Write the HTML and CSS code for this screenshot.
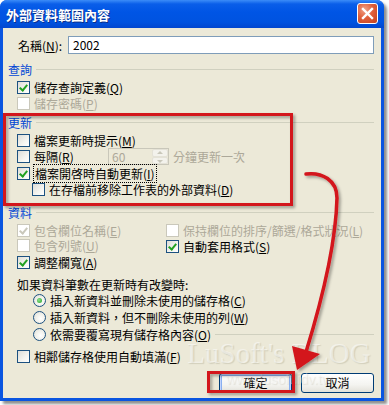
FILE: index.html
```html
<!DOCTYPE html>
<html lang="zh-Hant">
<head>
<meta charset="utf-8">
<link rel="stylesheet" href="styles.css">
</head>
<body>
<div class="window">
  <div class="titlebar">
    <span class="title">外部資料範圍內容</span>
    <span class="close"><svg width="21" height="21" viewBox="0 0 21 21"><path d="M6 6 L15 15 M15 6 L6 15" stroke="#fff" stroke-width="2.4" stroke-linecap="square"/></svg></span>
  </div>
  <div class="body">
    <div class="name-row">
      <span class="name-label">名稱(<u>N</u>):</span>
      <div class="input">2002</div>
    </div>

    <div class="group"><span class="group-label">查詢</span><span class="rule"></span></div>
    <div class="row"><span class="cb checked"></span><span>儲存查詢定義(<u>Q</u>)</span></div>
    <div class="row disabled"><span class="cb"></span><span>儲存密碼(<u>P</u>)</span></div>

    <div class="group g2"><span class="group-label">更新</span><span class="rule"></span></div>
    <div class="row r-prompt"><span class="cb"></span><span>檔案更新時提示(<u>M</u>)</span></div>
    <div class="row r-every">
      <span class="cb"></span><span class="every-label">每隔(<u>R</u>)</span>
      <div class="spin"><span class="spin-val">60</span><span class="spin-btns"><span class="sb up"></span><span class="sb down"></span></span></div>
      <span class="muted">分鐘更新一次</span>
    </div>
    <div class="row r-open"><span class="cb checked"></span><span class="focus">檔案開啓時自動更新(<u>I</u>)</span></div>
    <div class="row sub"><span class="cb"></span><span>在存檔前移除工作表的外部資料(<u>D</u>)</span></div>

    <div class="group g3"><span class="group-label">資料</span><span class="rule"></span></div>
    <div class="cols">
      <div class="col left">
        <div class="row disabled"><span class="cb checked"></span><span>包含欄位名稱(<u>E</u>)</span></div>
        <div class="row disabled"><span class="cb"></span><span>包含列號(<u>U</u>)</span></div>
        <div class="row"><span class="cb checked"></span><span>調整欄寬(<u>A</u>)</span></div>
      </div>
      <div class="col right">
        <div class="row disabled"><span class="cb"></span><span>保持欄位的排序/篩選/格式狀況(<u>L</u>)</span></div>
        <div class="row"><span class="cb checked"></span><span>自動套用格式(<u>S</u>)</span></div>
      </div>
    </div>
    <div class="text-row">如果資料筆數在更新時有改變時:</div>
    <div class="row radio-row"><span class="radio on"></span><span>插入新資料並刪除未使用的儲存格(<u>C</u>)</span></div>
    <div class="row radio-row"><span class="radio"></span><span>插入新資料，但不刪除未使用的列(<u>W</u>)</span></div>
    <div class="row radio-row last"><span class="radio"></span><span>依需要覆寫現有儲存格內容(<u>O</u>)</span><span class="rule"></span></div>
    <div class="row fill-row"><span class="cb"></span><span>相鄰儲存格使用自動填滿(<u>F</u>)</span></div>

    <div class="buttons">
      <button class="btn default">確定</button>
      <button class="btn">取消</button>
    </div>
  </div>
</div>

<div class="watermark"><div class="wm-big">LuSoft's BLOG</div><div class="wm-small">www.lusoft.idv.tw</div></div>

<svg class="annot" width="389" height="405" viewBox="0 0 389 405">
  <defs>
    <filter id="sh" x="-10%" y="-10%" width="130%" height="130%">
      <feDropShadow dx="2" dy="2" stdDeviation="1.5" flood-color="#000" flood-opacity="0.35"/>
    </filter>
  </defs>
  <g filter="url(#sh)">
    <rect x="4.5" y="114.5" width="287" height="90" fill="none" stroke="#d3131b" stroke-width="3"/>
    <rect x="208.5" y="372.5" width="85" height="19" fill="none" stroke="#d3131b" stroke-width="3"/>
    <path d="M306 174 C322 172 337 180 337 198 C336 240 322 300 306 352" fill="none" stroke="#d3131b" stroke-width="3.5" stroke-linecap="round"/>
    <path d="M297 370 L292 346 L320 354 Z" fill="#d3131b"/>
  </g>
</svg>
</body>
</html>
```

FILE: styles.css
```css
* { box-sizing: border-box; }
html, body { margin: 0; padding: 0; }
body {
  width: 389px;
  height: 405px;
  background: #ffffff;
  font-family: "Noto Sans CJK TC", "Noto Sans", sans-serif;
  font-size: 12px;
  color: #000;
  position: relative;
  overflow: hidden;
}
u { text-decoration: underline; }

.window {
  width: 384px;
  height: 401px;
  background: #0a55e0;
  border-radius: 7px 7px 0 0;
  padding: 0 3px 3px 3px;
  display: flex;
  flex-direction: column;
  box-shadow: 3px 3px 3px rgba(0,0,0,0.45);
}

.titlebar {
  height: 28px;
  margin: 0 -3px;
  border-radius: 7px 7px 0 0;
  background: linear-gradient(#3c8cf8 0px, #0a5ee9 4px, #0055e5 12px, #0053e0 22px, #0247cf 28px);
  display: flex;
  align-items: center;
  justify-content: space-between;
  padding: 0 6px 0 6px;
}
.title {
  color: #fff;
  font-weight: bold;
  font-size: 13px;
  letter-spacing: 0;
  text-shadow: 1px 1px 0 #0c2f8a;
}
.close {
  width: 21px;
  height: 21px;
  border: 1px solid #fff;
  border-radius: 3px;
  background: radial-gradient(circle at 35% 30%, #f0a48a 0%, #e0603c 45%, #c3401c 100%);
  display: flex;
  align-items: center;
  justify-content: center;
  margin-top: -1px;
}
.close svg { display: block; margin: -1px; }

.body {
  flex: 1;
  background: #ece9d8;
  padding: 8px 7px 0 5px;
  display: flex;
  flex-direction: column;
  position: relative;
}

.name-row {
  display: flex;
  align-items: center;
  height: 18px;
}
.name-label { width: 60px; padding-left: 10px; }
.input {
  width: 306px;
  height: 18px;
  border: 1px solid #7f9db9;
  background: #fff;
  padding: 0 4px;
  line-height: 16px;
  margin-left: 0;
}

.group {
  display: flex;
  align-items: center;
  height: 14px;
  margin-top: 8px;
}
.group-label { color: #0046d5; padding-right: 4px; }
.rule {
  flex: 1;
  height: 1px;
  background: #d0d0bf;
  margin-right: 0;
}
.g2 { margin-top: 4px; }
.g3 { margin-top: 8px; }

.row {
  display: flex;
  align-items: center;
  height: 16px;
  padding-left: 9px;
  white-space: nowrap;
}
.group + .row { margin-top: 3px; }
.r-every { height: 17px; }
.r-open { height: 17px; }
.sub { padding-left: 24px; height: 15px; }

.cb {
  width: 13px;
  height: 13px;
  border: 1px solid #1c5180;
  background: linear-gradient(135deg, #dcdcd7 0%, #f4f4f0 60%, #ffffff 100%);
  margin-right: 4px;
  flex: none;
  position: relative;
}
.cb.checked::after {
  content: "";
  position: absolute;
  left: 3px;
  top: 1px;
  width: 3px;
  height: 6px;
  border: solid #21a121;
  border-width: 0 2px 2px 0;
  transform: rotate(40deg);
}
.disabled { color: #aca899; }
.disabled .cb { border-color: #cac8bb; background: #fff; }
.disabled .cb.checked::after { border-color: #cac8bb; }

.focus { outline: 1px dotted #000; outline-offset: 0; padding: 0 1px; }

.every-label { width: 74px; }
.spin {
  width: 61px;
  height: 17px;
  border: 1px solid #c9c7ba;
  background: #ece9d8;
  display: flex;
  align-items: center;
  justify-content: space-between;
  margin-right: 4px;
}
.spin-val { color: #aca899; padding-left: 3px; font-size: 12px; }
.spin-btns {
  width: 16px;
  height: 15px;
  display: flex;
  flex-direction: column;
}
.sb {
  flex: 1;
  border: 1px solid #e4e2d7;
  background: #f3f2ec;
  border-radius: 2px;
  position: relative;
}
.sb.up::after, .sb.down::after {
  content: "";
  position: absolute;
  left: 4px;
  top: 1px;
  border-left: 3px solid transparent;
  border-right: 3px solid transparent;
}
.sb.up::after { border-bottom: 3px solid #c9c7ba; }
.sb.down::after { border-top: 3px solid #c9c7ba; top: 2px; }
.muted { color: #aca899; }

.cols { display: flex; margin-top: 3px; }
.col.left { width: 149px; }
.col.right { flex: 1; }
.col .row { height: 16px; }
.col.left .row:nth-child(2) { height: 15px; }
.col.left .row:nth-child(3) { height: 18px; }

.text-row {
  height: 16px;
  margin-top: 5px;
  padding-left: 9px;
  display: flex;
  align-items: center;
}
.radio-row { padding-left: 25px; height: 17px; }
.radio-row.last .rule { margin-left: 4px; }
.radio {
  width: 13px;
  height: 13px;
  border-radius: 50%;
  border: 1px solid #1c5180;
  background: radial-gradient(circle at 60% 60%, #ffffff 0%, #f0f0ea 50%, #d8d8d0 100%);
  margin-right: 4px;
  flex: none;
  position: relative;
}
.radio.on::after {
  content: "";
  position: absolute;
  left: 3px;
  top: 3px;
  width: 5px;
  height: 5px;
  border-radius: 50%;
  background: radial-gradient(circle at 40% 40%, #8ee28e, #21a121);
}
.fill-row { margin-top: 5px; }

.buttons {
  display: flex;
  justify-content: flex-end;
  gap: 9px;
  margin-top: 9px;
  padding-right: 0;
}
.btn {
  width: 73px;
  height: 20px;
  font-family: "Noto Sans CJK TC", sans-serif;
  font-size: 12px;
  border: 1px solid #003c74;
  border-radius: 3px;
  background: linear-gradient(#ffffff 0%, #f4f4f0 60%, #e3e2da 100%);
  padding: 0;
  line-height: 16px;
  color: #000;
}
.btn.default {
  box-shadow: inset 0 0 0 1px #c2d3fc, inset 0 0 0 2px #89aff0;
}

.watermark {
  position: absolute;
  left: 183px;
  top: 342px;
  width: 192px;
  text-align: center;
  pointer-events: none;
  font-family: "Liberation Serif", serif;
  color: rgba(255,255,255,0.5);
}
.wm-big {
  font-size: 29px;
  line-height: 22px;
  white-space: nowrap;
  text-shadow: 1px 1px 1px rgba(150,145,120,0.3);
}
.wm-small {
  font-size: 14px;
  line-height: 15px;
  margin-top: 8px;
  font-family: "Liberation Sans", sans-serif;
  color: rgba(255,255,255,0.35);
  text-shadow: 1px 1px 1px rgba(150,145,120,0.2);
}

.annot {
  position: absolute;
  left: 0;
  top: 0;
  pointer-events: none;
}
```
